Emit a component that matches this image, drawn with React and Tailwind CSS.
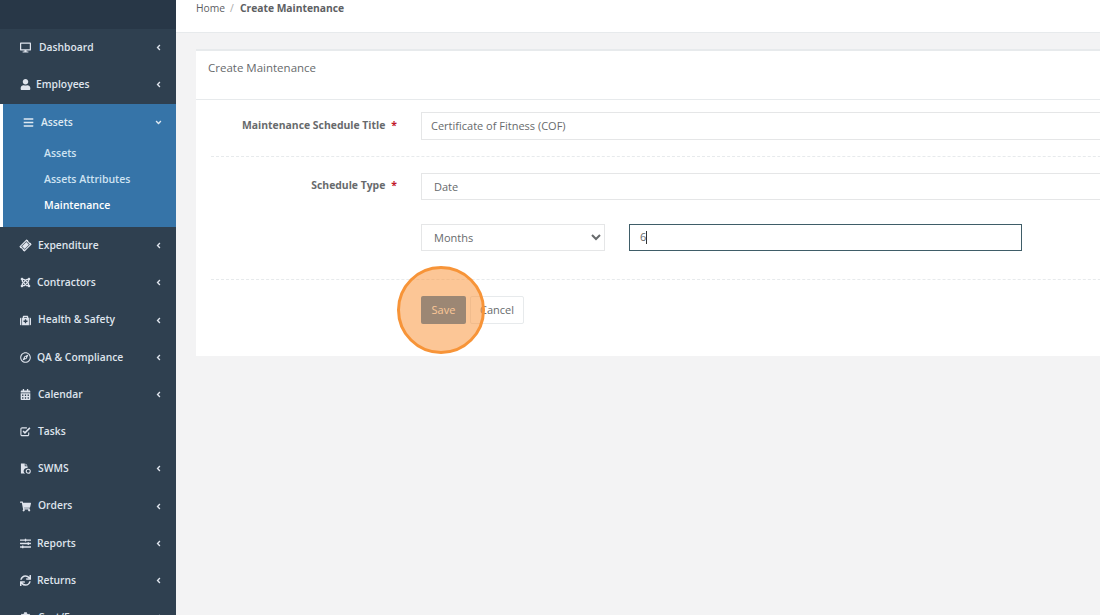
import {
  FaDesktop,
  FaUser,
  FaBars,
  FaTicketAlt,
  FaJoomla,
  FaMedkit,
  FaRegCompass,
  FaCalendarAlt,
  FaShoppingCart,
  FaSlidersH,
  FaSync,
  FaAngleLeft,
  FaAngleDown,
  FaCog,
} from "react-icons/fa";

// fa-check-square-o: the check pokes out of the box
function CheckSquareIcon({ className }) {
  return (
    <svg viewBox="0 0 12 12" className={className} fill="none" stroke="currentColor">
      <path d="M9.5 7v2.2a1.3 1.3 0 0 1-1.3 1.3H2.3A1.3 1.3 0 0 1 1 9.2V3.3A1.3 1.3 0 0 1 2.3 2h5.2" strokeWidth="1.2" />
      <path d="M3.4 5.4 5.4 7.4 10.8 2" strokeWidth="1.7" />
    </svg>
  );
}

// file with a folded corner and a small badge at the lower right
function FileBadgeIcon({ className }) {
  return (
    <svg viewBox="0 0 12 12" className={className} fill="currentColor">
      <path d="M1 0.5h4.2v3h3v2.2a3.2 3.2 0 0 0-2.6 5.8H1z" />
      <path d="M6 0.5 8.2 2.8H6z" />
      <circle cx="9" cy="9" r="2.2" fill="none" stroke="currentColor" strokeWidth="1.2" />
    </svg>
  );
}

function TicketIcon({ className }) {
  return <FaTicketAlt className={`-rotate-45 ${className}`} />;
}

const topItems = [
  { label: "Dashboard", icon: FaDesktop, gap: "gap-[8px]", arrow: true },
  { label: "Employees", icon: FaUser, gap: "gap-[5px]", arrow: true },
];

const bottomItems = [
  { label: "Expenditure", icon: TicketIcon, gap: "gap-[7px]", arrow: true },
  { label: "Contractors", icon: FaJoomla, gap: "gap-[6px]", arrow: true },
  { label: "Health & Safety", icon: FaMedkit, gap: "gap-[7px]", arrow: true },
  { label: "QA & Compliance", icon: FaRegCompass, gap: "gap-[6px]", arrow: true },
  { label: "Calendar", icon: FaCalendarAlt, gap: "gap-[7px]", arrow: true },
  { label: "Tasks", icon: CheckSquareIcon, gap: "gap-[7px]", arrow: false },
  { label: "SWMS", icon: FileBadgeIcon, gap: "gap-[7px]", arrow: true },
  { label: "Orders", icon: FaShoppingCart, gap: "gap-[7px]", arrow: true },
  { label: "Reports", icon: FaSlidersH, gap: "gap-[6px]", arrow: true },
  { label: "Returns", icon: FaSync, gap: "gap-[6px]", arrow: true },
  { label: "Cost/Forms", icon: FaCog, gap: "gap-[7px]", arrow: true },
];

function NavItem({ item }) {
  const Icon = item.icon;
  return (
    <div className="flex h-[37.2px] shrink-0 items-center pl-[20px] pr-[14px] text-[10.3px] font-semibold text-[#dfe4ed]">
      <div className={`flex min-w-0 flex-1 items-center ${item.gap}`}>
        <Icon className="h-[11px] w-[11px] shrink-0" />
        <span>{item.label}</span>
      </div>
      {item.arrow && <FaAngleLeft className="mr-[-1px] text-[9px]" />}
    </div>
  );
}

function Sidebar() {
  return (
    <aside className="flex h-full w-[176px] shrink-0 flex-col overflow-hidden bg-[#2f4050]">
      <div className="h-[29px] shrink-0 bg-[#283747]" />
      <div className="flex shrink-0 flex-col">
        {topItems.map((item) => (
          <NavItem key={item.label} item={item} />
        ))}
      </div>
      <div className="mt-[0.75px] h-[123px] shrink-0 border-l-[3px] border-white bg-[#3674a8] text-[10.5px] font-semibold text-[#cfe3f2]">
        <div className="flex h-[37px] items-center pl-[20px] pr-[14px] text-[#dfe9f2]">
          <FaBars className="mr-[7px] h-[11px] w-[11px]" />
          <span className="flex-1 text-[10.3px]">Assets</span>
          <FaAngleDown className="mr-[-1px] text-[9px]" />
        </div>
        <div className="pl-[41px]">
          <div className="flex h-[26px] items-center">Assets</div>
          <div className="flex h-[26px] items-center">Assets Attributes</div>
          <div className="flex h-[26px] items-center text-white">Maintenance</div>
        </div>
      </div>
      <div className="flex shrink-0 flex-col">
        {bottomItems.map((item) => (
          <NavItem key={item.label} item={item} />
        ))}
      </div>
    </aside>
  );
}

function RowLabel({ children }) {
  return (
    <div className="flex w-[210px] shrink-0 justify-end gap-[6px] pr-[24px] text-[10.4px] font-bold text-[#676a6c]">
      <span>{children}</span>
      <span className="text-[#c2182b]">*</span>
    </div>
  );
}

function MaintenanceForm() {
  const fieldClass =
    "border border-[#e5e6e7] bg-white text-[11px] text-[#676a6c] outline-none";

  return (
    <section className="w-[1000px] border-t-2 border-[#e7eaec] bg-white">
      <h2 className="h-[49px] border-b border-[#e7eaec] px-[12px] pt-[9px] text-[11.5px] font-normal leading-[16px] text-[#676a6c]">
        Create Maintenance
      </h2>
      <div className="px-[15px] pt-[12px]">
        <div className="flex items-start">
          <div className="pt-[6px]">
            <RowLabel>Maintenance Schedule Title</RowLabel>
          </div>
          <input
            readOnly
            value="Certificate of Fitness (COF)"
            className={`h-[28px] flex-1 pb-[1px] pl-[9px] text-[11.4px] ${fieldClass}`}
          />
        </div>
        <div className="my-[16px] border-t border-dashed border-[#e7eaec]" />
        <div className="flex items-start">
          <div className="pt-[5px]">
            <RowLabel>Schedule Type</RowLabel>
          </div>
          <input readOnly value="Date" className={`h-[27px] flex-1 pl-[12px] ${fieldClass}`} />
        </div>
        <div className="mt-[24px] flex pl-[210px]">
          <select className={`h-[27px] w-[184px] pl-[8px] ${fieldClass}`} defaultValue="Months">
            <option>Months</option>
          </select>
          <div className="ml-[24px] flex h-[27px] w-[393px] items-center border border-[#3f5d68] pl-[10px] text-[11px] text-[#676a6c]">
            6<span className="h-[13px] w-px bg-[#333]" />
          </div>
        </div>
        <div className="mb-[16px] mt-[28px] border-t border-dashed border-[#e7eaec]" />
        <div className="flex gap-[4px] pb-[32px] pl-[210px] text-[11px]">
          <button className="h-[28px] w-[45px] rounded-[2px] bg-[#337ab7] text-white">Save</button>
          <button className="h-[28px] w-[54px] rounded-[2px] border border-[#e7eaec] bg-white text-[#676a6c]">Cancel</button>
        </div>
      </div>
    </section>
  );
}

export default function App() {
  return (
    <div className="relative flex h-[615px] w-[1100px] overflow-hidden bg-[#f3f3f4] font-['Open_Sans',sans-serif]">
      <Sidebar />
      <main className="min-w-0 flex-1 overflow-hidden">
        <div className="h-[33px] border-b border-[#e7eaec] bg-white pl-[20px] pt-[1px] text-[10.3px] leading-[14px] text-[#5d6063]">
          Home<span className="mx-[5px] text-[#a9a9a9]">/</span>
          <span className="ml-[1px] font-bold">Create Maintenance</span>
        </div>
        <div className="pl-[20px] pt-[16px]">
          <MaintenanceForm />
        </div>
      </main>
      {/* highlight marker over the Save button */}
      <div className="absolute left-[397px] top-[266px] h-[88px] w-[88px] rounded-full border-[3px] border-[#f79438] bg-[#f99438]/53" />
    </div>
  );
}
